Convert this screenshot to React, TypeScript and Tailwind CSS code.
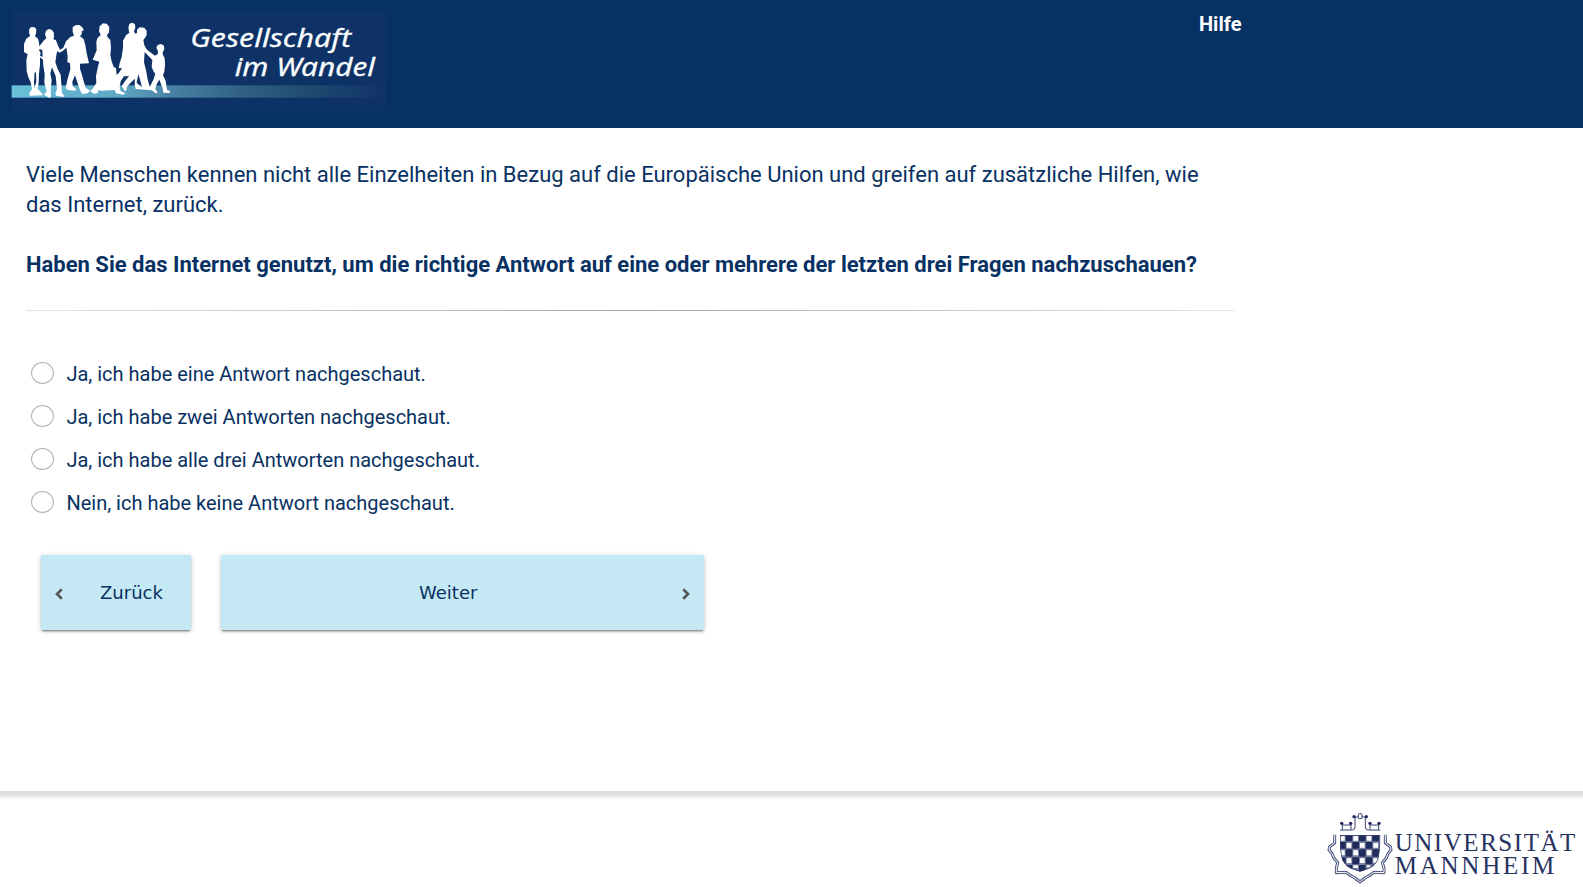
import { useState } from "react";

const options = [
  "Ja, ich habe eine Antwort nachgeschaut.",
  "Ja, ich habe zwei Antworten nachgeschaut.",
  "Ja, ich habe alle drei Antworten nachgeschaut.",
  "Nein, ich habe keine Antwort nachgeschaut.",
];

function SurveyLogo() {
  return (
    <svg className="block h-32 w-[400px]" viewBox="0 0 1200 384" role="img" aria-label="Gesellschaft im Wandel">
      <defs>
        <linearGradient id="band" x1="0" x2="1">
          <stop offset="0" stopColor="#68c0d9" />
          <stop offset="0.28" stopColor="#5fa9c5" />
          <stop offset="0.42" stopColor="#4983a5" />
          <stop offset="0.6" stopColor="#326287" />
          <stop offset="0.8" stopColor="#204a70" />
          <stop offset="1" stopColor="#0f3267" />
        </linearGradient>
      </defs>
      <rect x="35" y="30" width="1123" height="302" fill="#0e3266" />
      <rect x="35" y="256" width="1123" height="37" fill="url(#band)" />
      <g fill="#fff" fillRule="evenodd">
        <path d="M90 108 L87 96 L88 86 L94 81 L104 82 L109 88 L108 101 L105 109 L114 116 L117 128 L118 139 L132 121 L139 115 L135 102 L138 92 L146 87 L155 89 L161 97 L162 110 L160 117 L168 121 L174 137 L180 149 L190 143 L198 124 L211 111 L222 107 L218 95 L218 82 L226 76 L238 75 L245 80 L252 90 L246 93 L245 103 L240 109 L251 117 L256 136 L260 160 L267 190 L240 191 L240 206 L246 225 L252 247 L257 263 L270 272 L263 280 L246 282 L240 270 L235 256 L225 226 L217 245 L218 259 L229 268 L225 272 L203 270 L197 264 L202 240 L211 208 L210 190 L202 186 L203 168 L199 143 L187 154 L178 158 L173 153 L170 160 L166 187 L173 207 L182 224 L184 251 L186 280 L193 287 L189 291 L169 287 L166 281 L171 267 L167 229 L156 202 L151 220 L155 241 L152 271 L153 290 L148 294 L132 284 L140 274 L133 248 L134 221 L130 198 L129 179 L120 172 L120 195 L117 220 L116 248 L113 267 L128 282 L126 286 L89 287 L88 279 L96 267 L92 247 L85 232 L80 212 L79 180 L83 163 L72 156 L72 132 L79 116 Z M104 217 L102 246 L103 266 L109 245 L108 218 Z M116 149 L122 158 L120 168 L128 170 L127 151 L122 148 Z" />
        <path d="M302 105 L297 93 L299 79 L309 70 L320 71 L328 81 L327 97 L321 105 L323 112 L331 120 L333 144 L331 165 L335 184 L341 201 L348 204 L350 225 L357 218 L366 205 L356 204 L359 190 L365 171 L369 144 L369 122 L378 106 L388 98 L385 83 L388 71 L397 68 L405 73 L406 84 L402 93 L405 101 L411 99 L411 89 L419 82 L433 83 L440 92 L440 105 L435 114 L430 120 L433 136 L441 149 L465 167 L474 161 L473 151 L469 143 L473 135 L482 132 L491 136 L493 147 L488 158 L489 165 L494 174 L495 194 L493 215 L489 226 L497 242 L501 269 L511 274 L508 279 L490 278 L488 265 L478 239 L470 253 L466 266 L473 278 L467 280 L455 271 L435 269 L407 267 L404 254 L405 236 L391 249 L380 262 L380 270 L375 274 L365 259 L373 246 L387 228 L372 229 L362 244 L359 261 L362 273 L376 280 L370 284 L348 280 L344 270 L303 272 L294 270 L294 278 L284 282 L270 274 L278 266 L289 249 L288 228 L294 199 L298 185 L278 179 L290 151 L289 126 L292 115 Z M434 156 L457 180 L455 201 L461 215 L466 221 L461 237 L449 262 L443 238 L438 211 L432 187 Z M415 222 L427 263 L410 248 Z" />
      </g>
      <g fill="#fbfdff" stroke="#fbfdff" strokeWidth="0.8" fontFamily="'Noto Sans', 'Open Sans', sans-serif" fontStyle="italic" fontSize="76">
        <text x="571" y="141.5" textLength="482" lengthAdjust="spacingAndGlyphs">Gesellschaft</text>
        <text x="704" y="228.5" textLength="421" lengthAdjust="spacingAndGlyphs">im Wandel</text>
      </g>
    </svg>
  );
}

const crestOutline =
  "M65 149 V174 L50 185 L48 195 L57 205 L62 218 L74 233 L70 250 L70 263 L99 262 L113 272 L126 279 L141 291 L156 279 L169 272 L183 262 L213 263 L213 249 L208 233 L220 219 L225 206 L234 195 L232 185 L217 174 V149";
const shieldOutline =
  "M81 150 H202 V174 Q199 207 195 225 Q184 245 165 252 L141 260 L117 252 Q99 245 88 225 Q82 205 81 174 Z";

function UniversityLogo() {
  return (
    <svg className="block h-24 w-[270px]" viewBox="0 18 810 288" role="img" aria-label="Universität Mannheim">
      <g fill="none" stroke="#36416f" strokeWidth="3">
        <path d="M81 135 H118 Q126 134 126 126 V96 H157 V126 Q157 134 165 135 H202" />
        <path d="M88 112 V134 M88 120 H114 M114 112 V134 M171 120 H197 M171 112 V134 M197 112 V134" />
        <rect x="136" y="86" width="11" height="15" rx="3" fill="#fff" />
      </g>
      <g fill="#1f2b5b">
        <circle cx="86" cy="115" r="5" />
        <circle cx="113" cy="115" r="5" />
        <circle cx="171" cy="115" r="5" />
        <circle cx="198" cy="115" r="5" />
        <circle cx="123" cy="95" r="5" />
        <circle cx="160" cy="95" r="5" />
      </g>
      <g fill="none" strokeLinejoin="round">
        <path d={crestOutline} stroke="#4b557f" strokeWidth="9" />
        <path d={crestOutline} stroke="#fff" strokeWidth="3" />
      </g>
      <clipPath id="shield">
        <path d={shieldOutline} />
      </clipPath>
      <g clipPath="url(#shield)">
        <rect x="80" y="149" width="124" height="113" fill="#78809f" />
        <path
          fill="#1f2b5b"
          d="M98 149h20v20h-20z M138 149h20v20h-20z M178 149h20v20h-20z M80 171h18v20h-18z M118 171h20v20h-20z M158 171h20v20h-20z M98 193h20v22h-20z M138 193h20v22h-20z M178 193h22v22h-22z M84 217h14v20h-14z M118 217h20v21h-20z M158 217h20v21h-20z M98 240h20v20h-20z M138 240h20v22h-20z M178 240h20v20h-20z"
        />
        <path
          fill="#fff"
          d="M82 154h13v13h-13z M121 153h14v14h-14z M161 153h14v14h-14z M101 174h14v14h-14z M141 174h14v14h-14z M181 174h14v14h-14z M84 196h11v15h-11z M121 196h14v15h-14z M161 196h14v15h-14z M101 220h14v14h-14z M141 220h14v14h-14z M181 220h13v13h-13z M121 241h14v8h-14z M161 241h10v6h-10z"
        />
        <path d={shieldOutline} fill="none" stroke="#36416f" strokeWidth="4" />
      </g>
      <g fill="#26325f" fontFamily="'Liberation Serif', serif" fontSize="75">
        <text x="245" y="199" textLength="542" lengthAdjust="spacing">UNIVERSITÄT</text>
        <text x="245" y="266" textLength="479" lengthAdjust="spacing">MANNHEIM</text>
      </g>
    </svg>
  );
}

function Chevron({ left = false }: { left?: boolean }) {
  return (
    <svg className="mt-0.5 h-3 w-2" viewBox="0 0 8 12" fill="none" stroke="#555" strokeWidth="2.6">
      <path d={left ? "M6.8 1.3 L2 6 L6.8 10.7" : "M1.2 1.3 L6 6 L1.2 10.7"} />
    </svg>
  );
}

const buttonShadow = "shadow-[0_2px_2px_-1px_rgba(0,0,0,0.5),0_1px_5px_rgba(0,0,0,0.2)]";

export default function App() {
  const [selected, setSelected] = useState<number | null>(null);
  return (
    <div className="flex h-[887px] flex-col overflow-hidden bg-white font-['Roboto',sans-serif] text-[#083163]">
      <header className="flex h-32 shrink-0 bg-[#083163]">
        <SurveyLogo />
        <a href="#" className="ml-[799px] mt-2 h-8 text-[20px] leading-8 font-bold text-white">Hilfe</a>
      </header>

      <main className="flex grow flex-col">
        <section className="ml-[26px] w-[1209px] pt-8 text-[22px] leading-[30px]">
          <p>
            Viele Menschen kennen nicht alle Einzelheiten in Bezug auf die Europäische Union und greifen auf zusätzliche Hilfen, wie
            <br />
            das Internet, zurück.
          </p>
          <p className="mt-[30px] font-bold">
            Haben Sie das Internet genutzt, um die richtige Antwort auf eine oder mehrere der letzten drei Fragen nachzuschauen?
          </p>
          <div className="mt-[30px] h-px bg-linear-to-r from-[#e4e4e4] via-[#aaaaaa] to-[#e4e4e4]" />
        </section>

        <form className="mt-[41px] ml-[31px] flex flex-col" onSubmit={(e) => e.preventDefault()}>
          {options.map((label, i) => (
            <label key={label} className="flex h-[43px] items-center text-[20px] leading-[30px]">
              <input
                type="radio"
                name="lookup"
                checked={selected === i}
                onChange={() => setSelected(i)}
                className="mb-0.5 h-[22px] w-[23px] appearance-none rounded-[50%] border border-[#b4b4b4] bg-white checked:border-[7px] checked:border-[#083163]"
              />
              <span className="ml-[12.4px]">{label}</span>
            </label>
          ))}
          <div className="mt-[31px] ml-2.5 flex gap-[30px] font-['DejaVu_Sans',sans-serif] text-[18px]">
            <button className={`flex h-[75px] w-[150px] items-center bg-[#c5e9f4] pl-3.5 ${buttonShadow}`}>
              <Chevron left />
              <span className="ml-[37px]">Zurück</span>
            </button>
            <button className={`flex h-[75px] w-[483px] items-center bg-[#c5e9f4] pr-3.5 ${buttonShadow}`}>
              <span className="ml-[198px] grow text-left">Weiter</span>
              <Chevron />
            </button>
          </div>
        </form>
      </main>

      <footer className="flex h-24 shrink-0 justify-end bg-linear-to-b from-[#dedede] from-[3px] to-white to-[9px]">
        <UniversityLogo />
      </footer>
    </div>
  );
}
